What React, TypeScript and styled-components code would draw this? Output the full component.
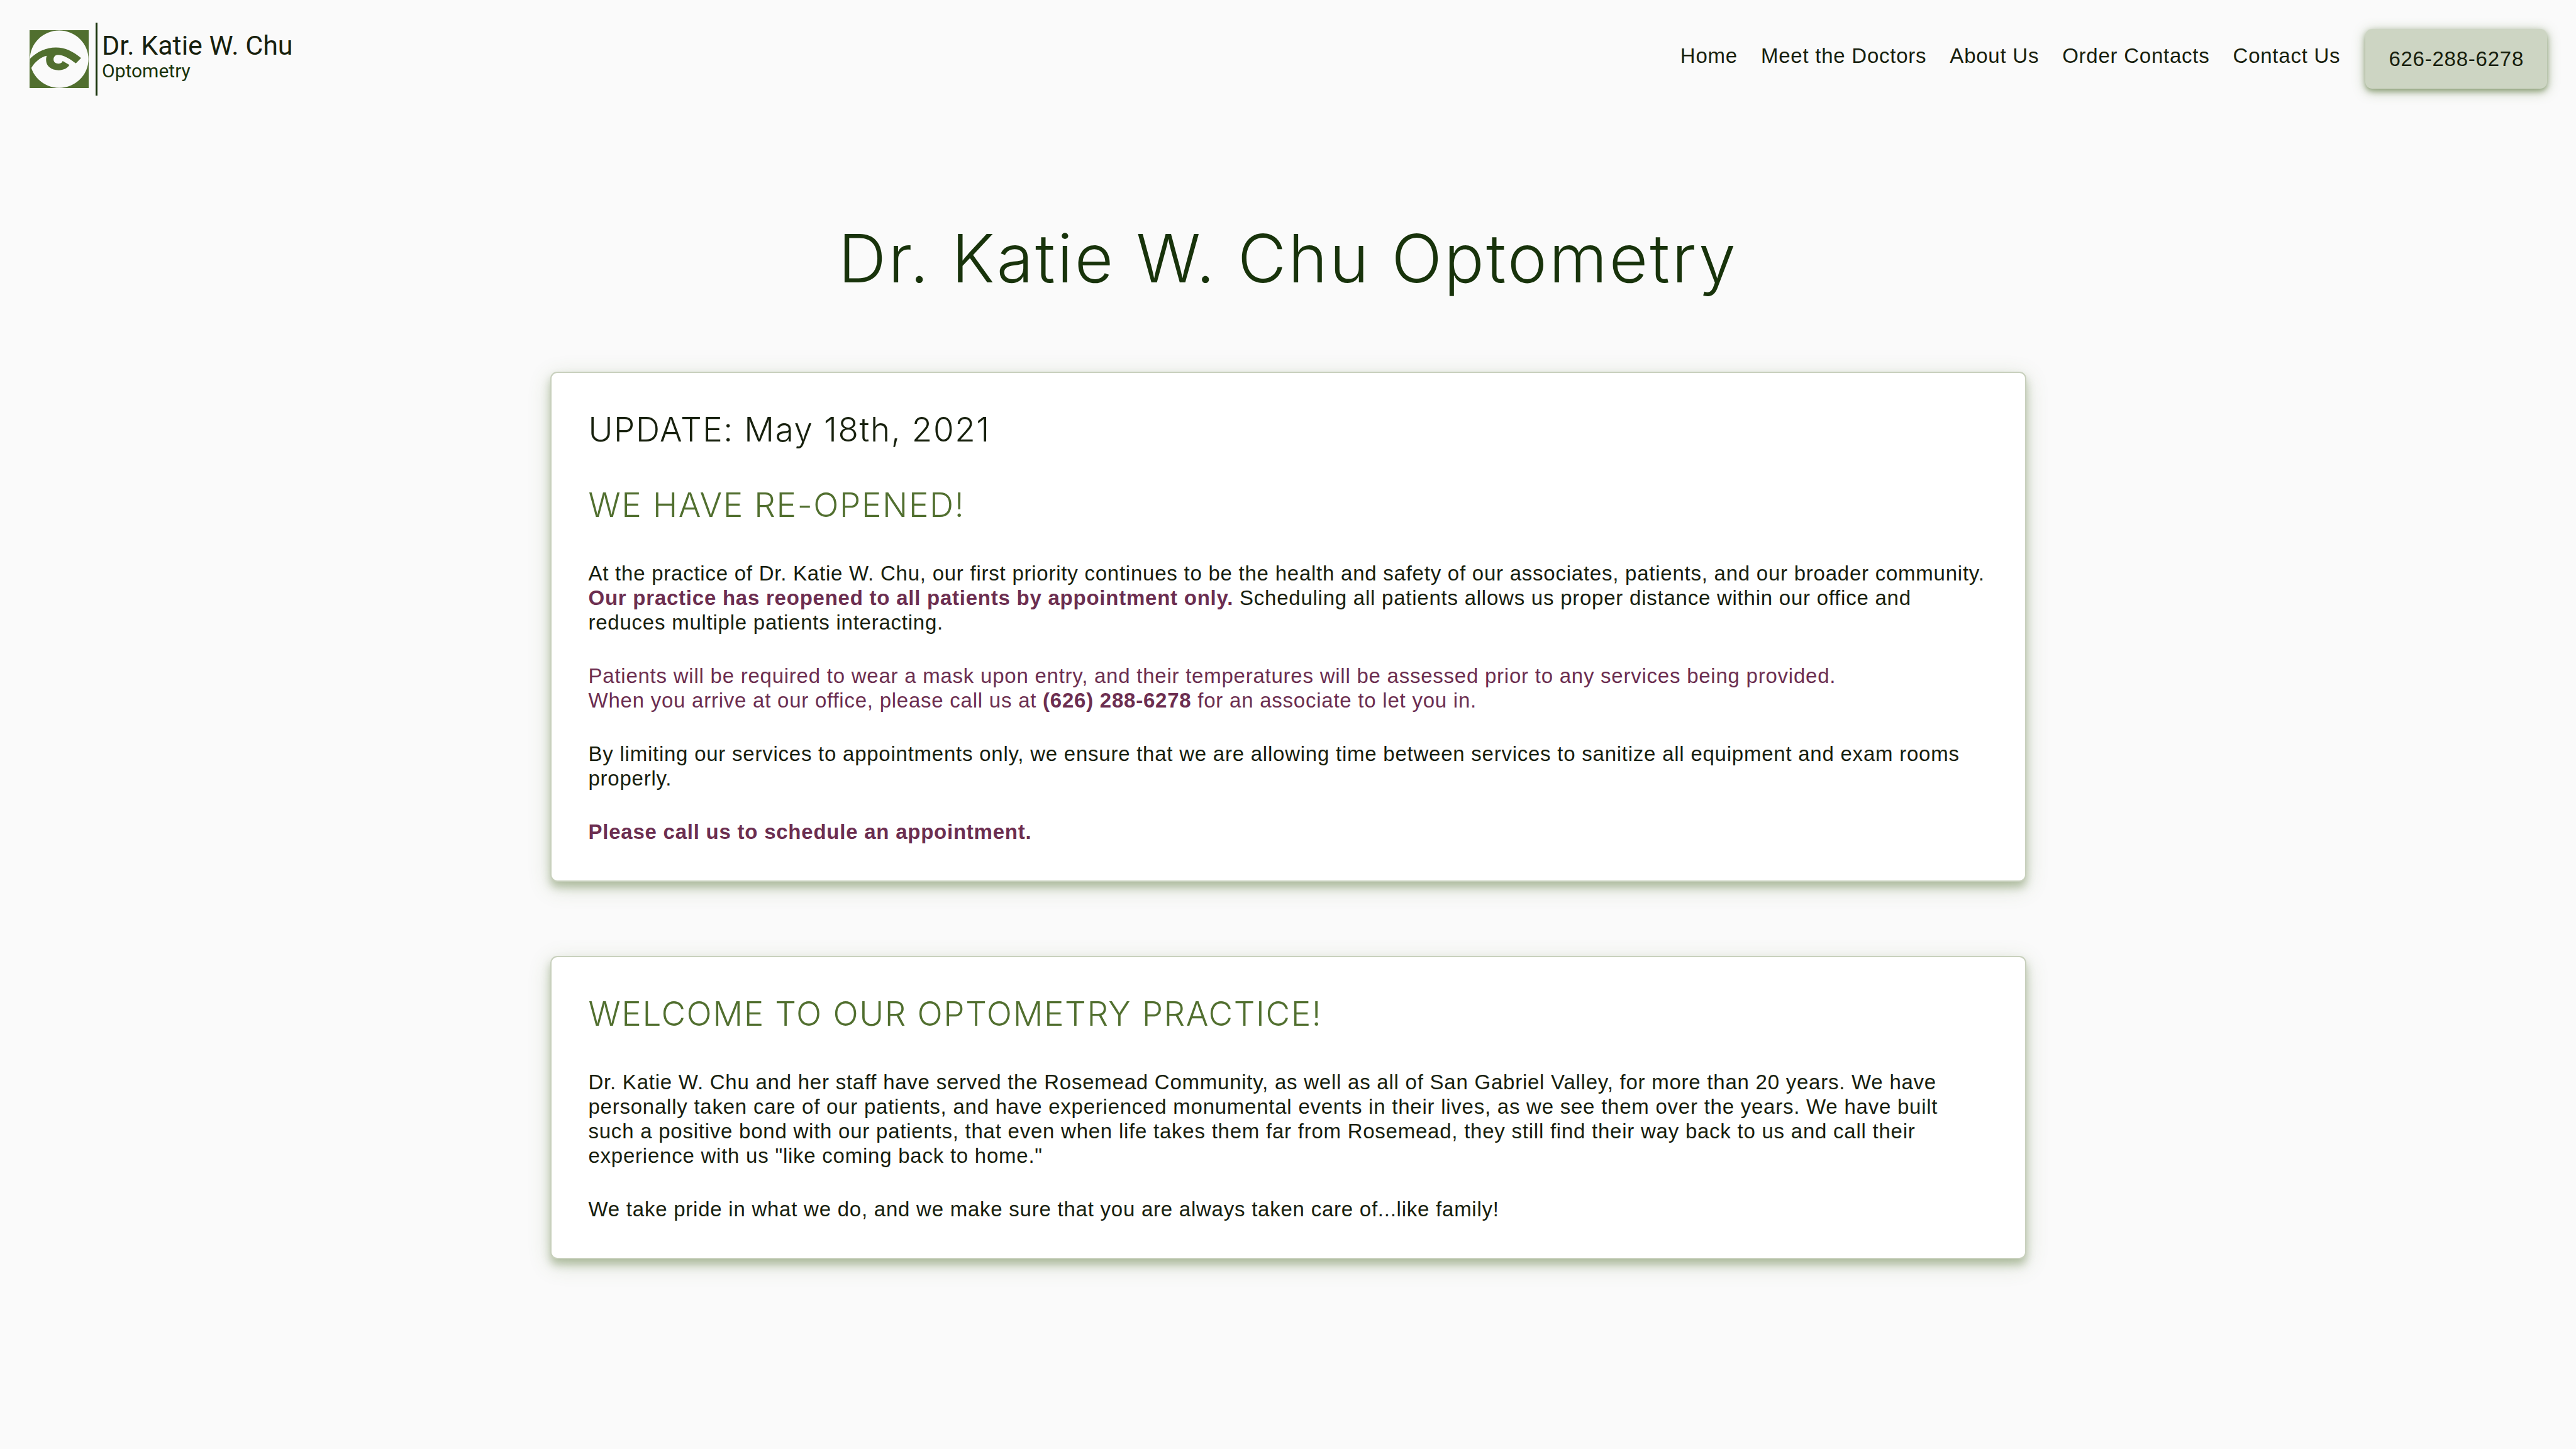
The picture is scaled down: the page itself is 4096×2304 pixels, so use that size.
import React from "react";
import styled, { createGlobalStyle } from "styled-components";

const ink = "#17200d";
const forest = "#18330b";
const moss = "#516f2f";
const plum = "#6c2e50";

const GlobalStyle = createGlobalStyle`
  * { box-sizing: border-box; }
  body {
    margin: 0;
    background: #fafafa;
    color: ${ink};
    font: 33px/39px "Liberation Sans", Arial, sans-serif;
    letter-spacing: 0.023em;
  }
`;

const Header = styled.header`
  display: flex;
  justify-content: space-between;
  align-items: flex-start;
  padding: 36px 46px 0 47px;
`;

const Brand = styled.a`
  display: flex;
  align-items: center;
  gap: 11px;
  color: ${ink};
  text-decoration: none;
  letter-spacing: 0;
`;

const Eye = styled.svg`
  display: block;
  width: 94px;
  height: 92px;
`;

const BrandText = styled.span`
  display: flex;
  flex-direction: column;
  height: 116px;
  padding: 12px 0 0 7px;
  border-left: 3px solid ${forest};
  font-family: Roboto, sans-serif;
`;

const BrandName = styled.span`
  font-size: 43px;
  line-height: 48px;
`;

const BrandField = styled.span`
  color: ${forest};
  font-size: 30px;
  line-height: 34px;
`;

const Nav = styled.nav`
  display: flex;
  align-items: flex-start;
  gap: 37px;
  padding-top: 10px;
`;

const NavLink = styled.a`
  padding-top: 23px;
  color: ${ink};
  text-decoration: none;
`;

const PhoneLink = styled.a`
  margin-left: 3px;
  padding: 28px 37px;
  border-radius: 11px;
  background: #cdd5c3;
  box-shadow: 0 4px 8px rgba(81, 111, 47, 0.5), 0 4px 20px rgba(81, 111, 47, 0.4);
  color: ${ink};
  text-decoration: none;
`;

const Main = styled.main`
  display: flex;
  flex-direction: column;
  align-items: center;
  gap: 118px;
  padding: 197px 40px 118px;
`;

const Title = styled.h1`
  margin: 0;
  color: ${forest};
  font: 300 106px/124px Inter, sans-serif;
  font-optical-sizing: none;
  letter-spacing: 0.03em;
`;

const Card = styled.section`
  display: flex;
  flex-direction: column;
  gap: 58px;
  width: 100%;
  max-width: 2347px;
  padding: 59px 60px 58px 59px;
  border: 2px solid #c8d0bd;
  border-radius: 11px;
  background: #fff;
  box-shadow: 0 9px 14px rgba(81, 111, 47, 0.35), 0 9px 36px rgba(81, 111, 47, 0.2);
`;

const Body = styled.div`
  display: flex;
  flex-direction: column;
  gap: 46px;
`;

const Heading = styled.h2<{ $color?: string }>`
  margin: 0;
  color: ${(p) => p.$color ?? moss};
  font: 300 53px/62px Inter, sans-serif;
  font-optical-sizing: none;
  letter-spacing: 0.03em;
`;

const Text = styled.p<{ $color?: string }>`
  margin: 0;
  color: ${(p) => p.$color ?? ink};
`;

const Strong = styled.strong`
  color: ${plum};
`;

const links = ["Home", "Meet the Doctors", "About Us", "Order Contacts", "Contact Us"];

export default function App() {
  return (
    <>
      <GlobalStyle />
      <Header>
        <Brand href="#">
          <Eye viewBox="84 88 530 519" preserveAspectRatio="none" aria-hidden="true">
            <path
              fill={moss}
              fillRule="evenodd"
              d="M84 88H614V607H84ZM349.500 91A262.500 257 0 0 0 349.500 605A262.500 257 0 0 0 349.500 91Z"
            />
            <path
              fill={moss}
              d="M86 346C152 280 232 243 320 243C400 243 466 273 546 338L499 386C446 343 385 309 338 309C314 309 299 328 299 350C299 374 319 388 345 388C364 388 376 380 381 365L441 400C424 430 389 447 345 447C278 447 232 410 232 355C232 342 234 328 238 318C190 326 131 370 100 428L86 390Z"
            />
          </Eye>
          <BrandText>
            <BrandName>Dr. Katie W. Chu</BrandName>
            <BrandField>Optometry</BrandField>
          </BrandText>
        </Brand>
        <Nav>
          {links.map((label) => (
            <NavLink href="#" key={label}>{label}</NavLink>
          ))}
          <PhoneLink href="tel:6262886278">626-288-6278</PhoneLink>
        </Nav>
      </Header>
      <Main>
        <Title>Dr. Katie W. Chu Optometry</Title>
        <Card>
          <Heading $color={ink}>UPDATE: May 18th, 2021</Heading>
          <Heading>WE HAVE RE-OPENED!</Heading>
          <Body>
            <Text>
              At the practice of Dr. Katie W. Chu, our first priority continues to be the health and safety of our
              associates, patients, and our broader community.
              <br />
              <Strong>Our practice has reopened to all patients by appointment only.</Strong> Scheduling all patients
              allows us proper distance within our office and reduces multiple patients interacting.
            </Text>
            <Text $color={plum}>
              Patients will be required to wear a mask upon entry, and their temperatures will be assessed prior to
              any services being provided.
              <br />
              When you arrive at our office, please call us at <Strong>(626) 288-6278</Strong> for an associate to let
              you in.
            </Text>
            <Text>
              By limiting our services to appointments only, we ensure that we are allowing time between services to
              sanitize all equipment and exam rooms properly.
            </Text>
            <Text>
              <Strong>Please call us to schedule an appointment.</Strong>
            </Text>
          </Body>
        </Card>
        <Card>
          <Heading>WELCOME TO OUR OPTOMETRY PRACTICE!</Heading>
          <Body>
            <Text>
              Dr. Katie W. Chu and her staff have served the Rosemead Community, as well as all of San Gabriel Valley,
              for more than 20 years. We have personally taken care of our patients, and have experienced monumental
              events in their lives, as we see them over the years. We have built such a positive bond with our
              patients, that even when life takes them far from Rosemead, they still find their way back to us and
              call their experience with us "like coming back to home."
            </Text>
            <Text>We take pride in what we do, and we make sure that you are always taken care of...like family!</Text>
          </Body>
        </Card>
      </Main>
    </>
  );
}
